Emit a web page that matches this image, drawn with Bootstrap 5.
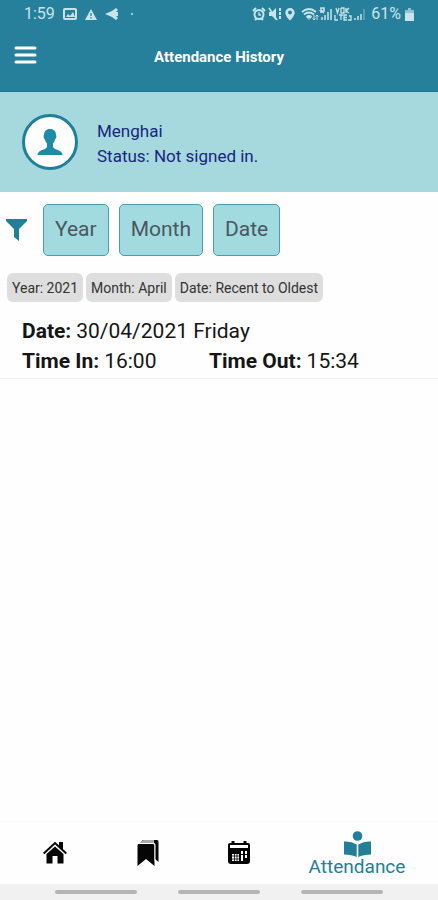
<!DOCTYPE html>
<html lang="en">
<head>
<meta charset="utf-8">
<meta name="viewport" content="width=device-width, initial-scale=1">
<title>Attendance History</title>
<link href="https://cdn.jsdelivr.net/npm/bootstrap@5.3.0/dist/css/bootstrap.min.css" rel="stylesheet">
<style>
  body { font-family: Roboto, "Liberation Sans", sans-serif; color: #151515; background: #fefefe; }
  svg { display: block; flex: none; }
  .top-area { background: #26809b; color: #fff; border-bottom: 1px solid #1d7791; }
  .status-bar { height: 28px; padding: 0 24px; color: #c9e5ec; font-size: 16px; line-height: 28px; }
  .title-bar { display: grid; grid-template-columns: 48px 1fr 48px; height: 58px; margin-bottom: 5px; align-items: center; }
  .title-bar h1 { font-size: 15px; line-height: 20px; }
  .menu-btn { padding: 0 0 4px 14px; line-height: 1; }
  .profile { background: #a5d9de; color: #18257f; height: 100px; padding: 0 22px; gap: 19px; font-size: 17px; line-height: 25px; }
  .avatar { width: 56px; height: 56px; border: 3px solid #207f9a; background: #fff; }
  .filters { padding: 12px 6px 0; gap: 10px; }
  .filter-icon { margin-right: 6px; }
  .filter-btn { height: 52px; padding: 0 11px; border: 1px solid #4b9cae; border-radius: 5px; background: #a2dbdf; color: #4b5661; font-size: 21px; }
  .chips { padding: 17px 7px 0; gap: 3px; }
  .chip { height: 29px; padding: 0 5px; border-radius: 6px; background: #dedede; color: #333; font-size: 14px; line-height: 30px; }
  .entry { padding: 14px 22px 2px; border-bottom: 1px solid #f3f3f3; font-size: 21px; line-height: 30px; }
  .entry dt { font-weight: 700; }
  .pair { gap: 5px; }
  .time-in { width: 187px; }
  .tabs { display: grid; grid-template-columns: 92fr 92fr 92fr 144fr; height: 63px; padding: 0 9px; border-top: 1px solid #f9f9f9; }
  .tabs a { color: #050505; font-size: 19px; line-height: 19px; }
  .tabs a.active { color: #227f98; }
  .handles { height: 16px; padding: 0 55px; background: #f1f1f1; }
  .handles span { width: 25%; height: 4px; border-radius: 2px; background: #b5b5b5; }
</style>
<script src="https://cdn.jsdelivr.net/npm/bootstrap@5.3.0/dist/js/bootstrap.bundle.min.js"></script>
</head>
<body>
<div class="d-flex flex-column min-vh-100">
  <header class="top-area">
    <div class="status-bar d-flex justify-content-between align-items-center">
      <div class="d-flex align-items-center gap-2">
        <span>1:59</span>
        <svg width="14" height="12" viewBox="0 0 14 12"><rect x="1" y="1" width="12" height="10" rx="1" fill="none" stroke="currentColor" stroke-width="2"/><path d="M3 9l2-3 2 2 3-4 2 5z" fill="currentColor"/></svg>
        <svg width="12" height="11" viewBox="0 0 12 11"><path d="M6 0l6 11H0z" fill="currentColor"/><path d="M6 4v3M6 8v1.500" stroke="#26809b" stroke-width="1.200"/></svg>
        <svg width="14" height="12" viewBox="0 0 14 12"><path d="M0 6l7-3 4-3 2 2-2 2h2v4h-2l2 2-2 2-4-3z" fill="currentColor"/></svg>
        <svg width="14" height="12" viewBox="0 0 14 12"><circle cx="5" cy="6" r="1" fill="currentColor"/></svg>
      </div>
      <div class="d-flex align-items-center gap-1">
        <svg width="115" height="14" viewBox="0 0 115 14" fill="none" stroke="currentColor">
          <g stroke-width="2"><circle cx="7" cy="7.500" r="4.500"/><path d="M1 4l3-3M13 4l-3-3M3 13l2-2M11 13l-2-2"/><path d="M7 5v3h2" stroke-width="1.300"/></g>
          <path d="M17 5h3l4-4v12l-4-4h-3z" fill="currentColor" stroke="none"/><path d="M17 1l8 12" stroke-width="1.500"/><path d="M28 1v12" stroke-width="2" stroke-dasharray="3 1"/>
          <path d="M38 1a4.700 4.700 0 0 0-4.700 4.700C33.300 9 38 13.500 38 13.500S42.700 9 42.700 5.700A4.700 4.700 0 0 0 38 1zm0 2.500a2 2 0 1 1 0 4 2 2 0 0 1 0-4z" fill="currentColor" stroke="none"/>
          <path d="M50 5q7-6 14 0M52 7.500q5-4 10 0M54.500 10q2.500-2 5 0" stroke-width="1.700"/><path d="M57 12.500l-2-2h4zM62 8v5M60.500 11.500L62 13l1.500-1.500M65 13V8M63.500 9.500L65 8l1.500 1.500" stroke-width="1"/>
          <path d="M69 6V1h3v3h-3l3 2M70 13v-3M73 13V8M76 13V5M79 13V2" stroke-width="1.500"/>
          <path d="M84 1l1.500 5L87 1M89 1v5h3V1h-3M94 1v5M97 1l-3 3 3 2M83 8v5h3M87 8h4M89 8v5M95 8h-3v5h3M92 10.500h3M97 9h2v4h-3" stroke-width="1.300"/>
          <path d="M103 13v-2M106 13v-4M109 13V7" stroke-width="1.500"/><path d="M112 13V2" stroke-width="1.500" opacity=".4"/>
        </svg>
        <span>61%</span>
        <svg width="9" height="13" viewBox="0 0 9 13"><path d="M3 0h3v2h3v3H0V2h3z" fill="currentColor" opacity=".65"/><path d="M0 5h9v8H0z" fill="currentColor"/></svg>
      </div>
    </div>
    <div class="title-bar">
      <button type="button" class="menu-btn btn border-0" aria-label="Open menu">
        <svg width="23" height="18" viewBox="0 0 23 18"><path d="M2 2h19M2 9h19M2 16h19" stroke="#fff" stroke-width="3" stroke-linecap="round"/></svg>
      </button>
      <h1 class="m-0 text-center fw-bold">Attendance History</h1>
    </div>
  </header>

  <section class="profile d-flex align-items-center">
    <div class="avatar rounded-circle d-flex align-items-center justify-content-center">
      <svg width="26" height="28" viewBox="0 0 26 28"><path d="M13 1c-4 0-6 2.500-6 6-1 1 0 4 1 4.500.3 2 1 3 2 4V19c-1 2-4 2.500-6 3.500C2 23.500.5 25 .5 27h25c0-2-1.500-3.500-3.500-4.500-2-1-5-1.500-6-3.500v-3.500c1-1 1.700-2 2-4 1-.5 2-3.500 1-4.500 0-3.500-2-6-6-6z" fill="#208ba6"/></svg>
    </div>
    <div class="pt-1"><div>Menghai</div><div>Status: Not signed in.</div></div>
  </section>

  <main class="flex-grow-1">
    <div class="filters d-flex align-items-center">
      <svg class="filter-icon" width="21" height="22" viewBox="0 0 21 22"><path d="M0 0h21v2l-8 8v12l-5-4v-8L0 2z" fill="#207f99"/></svg>
      <button type="button" class="filter-btn">Year</button>
      <button type="button" class="filter-btn">Month</button>
      <button type="button" class="filter-btn">Date</button>
    </div>
    <div class="chips d-flex">
      <span class="chip">Year: 2021</span>
      <span class="chip">Month: April</span>
      <span class="chip">Date: Recent to Oldest</span>
    </div>
    <dl class="entry m-0">
      <div class="pair d-flex"><dt>Date:</dt><dd class="m-0">30/04/2021 Friday</dd></div>
      <div class="d-flex">
        <div class="pair time-in d-flex"><dt>Time In:</dt><dd class="m-0">16:00</dd></div>
        <div class="pair d-flex"><dt>Time Out:</dt><dd class="m-0">15:34</dd></div>
      </div>
    </dl>
  </main>

  <footer>
    <nav class="tabs" aria-label="Main">
      <a href="#home" class="d-flex align-items-center justify-content-center" aria-label="Home">
        <svg width="24" height="24" viewBox="0 0 24 24"><path d="M3.500 13L12 5.500l8.500 7.500v9.500h-6V15h-5v7.500h-6z" fill="currentColor"/><path d="M.7 12.500L12 2l11.300 10.500" fill="none" stroke="currentColor" stroke-width="2"/><path d="M16 1h4v8l-4-3.500z" fill="currentColor"/></svg>
      </a>
      <a href="#bookmarks" class="d-flex align-items-center justify-content-center" aria-label="Bookmarks">
        <svg width="23" height="26" viewBox="0 0 23 26"><path d="M5 2q1-2 3-2h13q1.500 0 1.500 2v20L19 19V5q0-2-2-2z" fill="currentColor"/><path d="M5 2q1-2 3-2h10v3H4z" fill="#aaa"/><path d="M2.500 4H17q1.500 0 1.500 2v20L10 19l-8.500 7V6Q1.500 4 2.500 4z" fill="currentColor"/><path d="M17 3q2 0 2 2v16" fill="none" stroke="#fff"/></svg>
      </a>
      <a href="#calendar" class="d-flex align-items-center justify-content-center" aria-label="Calendar">
        <svg width="24" height="24" viewBox="0 0 24 24"><path d="M3 2h18q2 0 2 2v16q0 3-3 3H4q-3 0-3-3V4q0-2 2-2z" fill="currentColor"/><path d="M3 4h18v3H3z" fill="#fff"/><path d="M6 0v3M18 0v3" stroke="currentColor" stroke-width="3"/><path d="M5 13h7v7H5zM14 10h2v3h-2zM18 10h2v3h-2zM14 14h2v6h-2zM18 14h2v3h-2z" fill="#fff"/><path d="M5 15h7M5 18h7M7.500 13v7M10 13v7" stroke="currentColor" stroke-width=".8"/></svg>
      </a>
      <a href="#attendance" class="active d-flex flex-column align-items-center justify-content-center text-decoration-none" aria-current="page">
        <svg width="27" height="26" viewBox="0 0 27 26"><circle cx="13.500" cy="5" r="4.800" fill="currentColor"/><path d="M0 10.500q7-.5 12.700 3V26Q8 23.500 0 23.500zM27 10.500q-7-.5-12.700 3V26q4.700-2.500 12.700-2.500z" fill="currentColor"/></svg>
        <span>Attendance</span>
      </a>
    </nav>
    <div class="handles d-flex align-items-center justify-content-between"><span></span><span></span><span></span></div>
  </footer>
</div>
</body>
</html>
